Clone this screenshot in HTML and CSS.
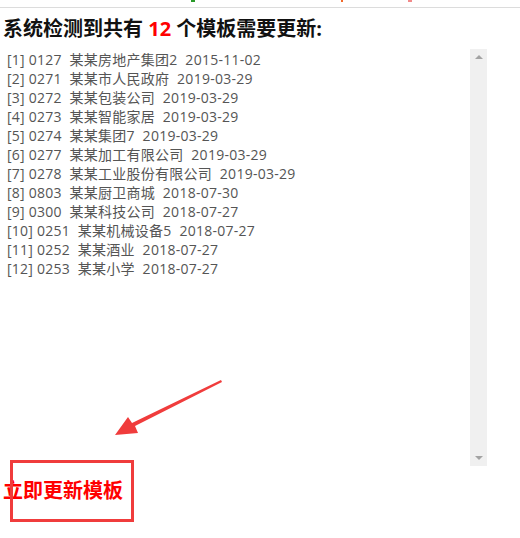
FILE: index.html
```html
<!DOCTYPE html>
<html lang="zh-CN">
<head>
    <meta charset="UTF-8">
    <title>模板更新</title>
    <link rel="stylesheet" href="styles.css">
</head>
<body>
    <div class="topbar">
        <span class="dot dot-green"></span>
        <span class="dot dot-orange"></span>
        <span class="dot dot-pink"></span>
    </div>

    <div class="page">
        <h2 class="title">系统检测到共有 <span class="count">12</span> 个模板需要更新:</h2>

        <div class="list-box">
            <div class="list">
                <div>[1] 0127&nbsp; 某某房地产集团2&nbsp; 2015-11-02</div>
                <div>[2] 0271&nbsp; 某某市人民政府&nbsp; 2019-03-29</div>
                <div>[3] 0272&nbsp; 某某包装公司&nbsp; 2019-03-29</div>
                <div>[4] 0273&nbsp; 某某智能家居&nbsp; 2019-03-29</div>
                <div>[5] 0274&nbsp; 某某集团7&nbsp; 2019-03-29</div>
                <div>[6] 0277&nbsp; 某某加工有限公司&nbsp; 2019-03-29</div>
                <div>[7] 0278&nbsp; 某某工业股份有限公司&nbsp; 2019-03-29</div>
                <div>[8] 0803&nbsp; 某某厨卫商城&nbsp; 2018-07-30</div>
                <div>[9] 0300&nbsp; 某某科技公司&nbsp; 2018-07-27</div>
                <div>[10] 0251&nbsp; 某某机械设备5&nbsp; 2018-07-27</div>
                <div>[11] 0252&nbsp; 某某酒业&nbsp; 2018-07-27</div>
                <div>[12] 0253&nbsp; 某某小学&nbsp; 2018-07-27</div>
            </div>
            <div class="scrollbar">
                <span class="arrow-up"></span>
                <span class="arrow-down"></span>
            </div>
        </div>

        <a class="update-link" href="#">立即更新模板</a>

        <!-- annotation -->
        <svg class="pointer" width="120" height="70" viewBox="0 0 120 70">
            <polygon points="118,2 119,4 32,48 35,55 12,57 25,39 29,45" fill="#f03c3c"/>
        </svg>
        <div class="mark-box"></div>
    </div>
</body>
</html>
```

FILE: styles.css
```css
* {
    margin: 0;
    padding: 0;
    box-sizing: border-box;
}

body {
    font-family: "Open Sans", "Noto Sans CJK SC", sans-serif;
    background: #fff;
    width: 520px;
    height: 538px;
    overflow: hidden;
}

.topbar {
    height: 8px;
    border-bottom: 1px solid #dcdcdc;
    position: relative;
}

.dot {
    position: absolute;
    top: 0;
    width: 4px;
    height: 2px;
}

.dot-green {
    left: 191px;
    background: #2a9a2a;
}

.dot-orange {
    left: 341px;
    width: 2px;
    background: #f26a2a;
}

.dot-pink {
    left: 408px;
    background: #f28a8a;
}

.page {
    position: relative;
    padding: 8px 0 0 3px;
}

.title {
    font-size: 20px;
    font-weight: bold;
    color: #111;
    line-height: 26px;
    height: 26px;
    white-space: nowrap;
}

.count {
    color: #ff0000;
}

.list-box {
    display: flex;
    width: 484px;
    height: 421px;
    margin-top: 5px;
}

.list {
    flex: 1;
    padding: 3px 4px;
    font-size: 14px;
    line-height: 19px;
    letter-spacing: 0.25px;
    color: #555;
    white-space: nowrap;
}

.scrollbar {
    width: 17px;
    margin: 2px 0;
    background: #f0f0f0;
    position: relative;
}

.arrow-up,
.arrow-down {
    position: absolute;
    left: 5px;
    width: 0;
    height: 0;
    border-left: 4px solid transparent;
    border-right: 4px solid transparent;
}

.arrow-up {
    top: 6px;
    border-bottom: 4px solid #a3a3a3;
}

.arrow-down {
    bottom: 6px;
    border-top: 4px solid #a3a3a3;
}

.update-link {
    display: block;
    margin-top: 10px;
    font-size: 20px;
    font-weight: bold;
    color: #ff0000;
    text-decoration: none;
    line-height: 26px;
}

.pointer {
    position: absolute;
    left: 103px;
    top: 370px;
}

.mark-box {
    position: absolute;
    left: 10px;
    top: 452px;
    width: 124px;
    height: 62px;
    border: 3px solid #f03c3c;
}
```
